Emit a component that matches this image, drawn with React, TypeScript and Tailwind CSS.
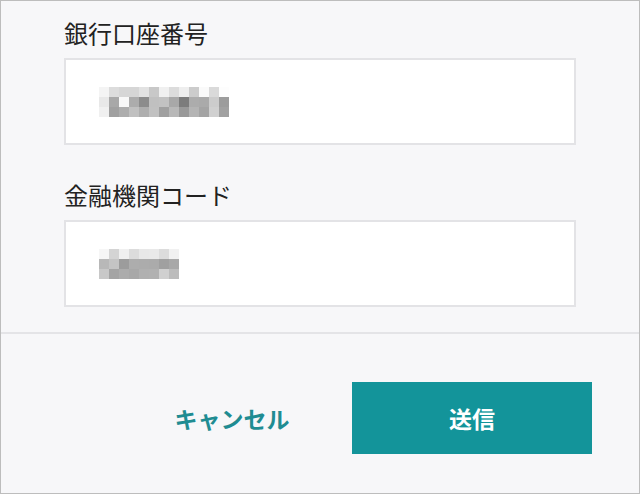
import React from 'react';

const accountPixels = [
  ['bg-[#f4f4f4]', 'bg-[#dcdcdc]', 'bg-[#d6d6d6]', 'bg-[#d6d6d6]', 'bg-[#e2e2e2]', 'bg-[#c8c8c8]', 'bg-[#f0f0f0]', 'bg-[#dcdcdc]', 'bg-[#eeeeee]', 'bg-[#cccccc]', 'bg-[#fafafa]', 'bg-[#dadada]', 'bg-[#fdfdfd]'],
  ['bg-[#e8e8e8]', 'bg-[#a8a8a8]', 'bg-[#f8f8f8]', 'bg-[#acacac]', 'bg-[#8c8c8c]', 'bg-[#c0c0c0]', 'bg-[#c2c2c2]', 'bg-[#a8a8a8]', 'bg-[#7c7c7c]', 'bg-[#acacac]', 'bg-[#aaaaaa]', 'bg-[#cccccc]', 'bg-[#9c9c9c]'],
  ['bg-[#f0f0f0]', 'bg-[#a0a0a0]', 'bg-[#adadad]', 'bg-[#c0c0c0]', 'bg-[#aeaeae]', 'bg-[#c1c1c1]', 'bg-[#a0a0a0]', 'bg-[#b8b8b8]', 'bg-[#999999]', 'bg-[#b4b4b4]', 'bg-[#a4a4a4]', 'bg-[#d0d0d0]', 'bg-[#a1a1a1]'],
];

const codePixels = [
  ['bg-[#f6f6f6]', 'bg-[#d4d4d4]', 'bg-[#f0f0f0]', 'bg-[#dcdcdc]', 'bg-[#e8e8e8]', 'bg-[#e9e9e9]', 'bg-[#dcdcdc]', 'bg-[#f1f1f1]'],
  ['bg-[#b8b8b8]', 'bg-[#c4c4c4]', 'bg-[#9c9c9c]', 'bg-[#adadad]', 'bg-[#acacac]', 'bg-[#ababab]', 'bg-[#a0a0a0]', 'bg-[#a8a8a8]'],
  ['bg-[#c8c8c8]', 'bg-[#a4a4a4]', 'bg-[#acacac]', 'bg-[#a8a8a8]', 'bg-[#b0b0b0]', 'bg-[#b1b1b1]', 'bg-[#d0d0d0]', 'bg-[#bcbcbc]'],
];

const Mosaic = ({ rows }: { rows: string[][] }) => (
  <div className="flex flex-col">
    {rows.map((row, i) => (
      <div key={i} className="flex">
        {row.map((c, j) => (
          <div key={j} className={`w-[10px] h-[10px] ${c}`} />
        ))}
      </div>
    ))}
  </div>
);

const Field = ({ label, rows, className }: { label: string; rows: string[][]; className?: string }) => (
  <div className={className}>
    <div className="text-[24px] leading-8 text-[#222222]">{label}</div>
    <div className="mt-[9px] h-[87px] w-[512px] border-2 border-[#e3e3e6] bg-white flex items-center pl-[33px]">
      <Mosaic rows={rows} />
    </div>
  </div>
);

export default function App() {
  return (
    <div
      className="w-[640px] h-[494px] border border-[#bdbdbd] bg-[#f7f7f9] flex flex-col"
      style={{ fontFamily: '"Noto Sans CJK JP", "Noto Sans", sans-serif' }}
    >
      <div className="pl-[63px] pt-[16px] pb-[25px] border-b-2 border-[#e4e4e7]">
        <Field label="銀行口座番号" rows={accountPixels} />
        <Field label="金融機関コード" rows={codePixels} className="mt-[34px]" />
      </div>
      <div className="flex justify-end pr-[47px] pt-[48px]">
        <button className="w-[240px] h-[72px] text-[23px] font-bold text-[#1f8c92]">キャンセル</button>
        <button className="w-[240px] h-[72px] bg-[#13949a] text-[23px] font-bold text-white">送信</button>
      </div>
    </div>
  );
}
